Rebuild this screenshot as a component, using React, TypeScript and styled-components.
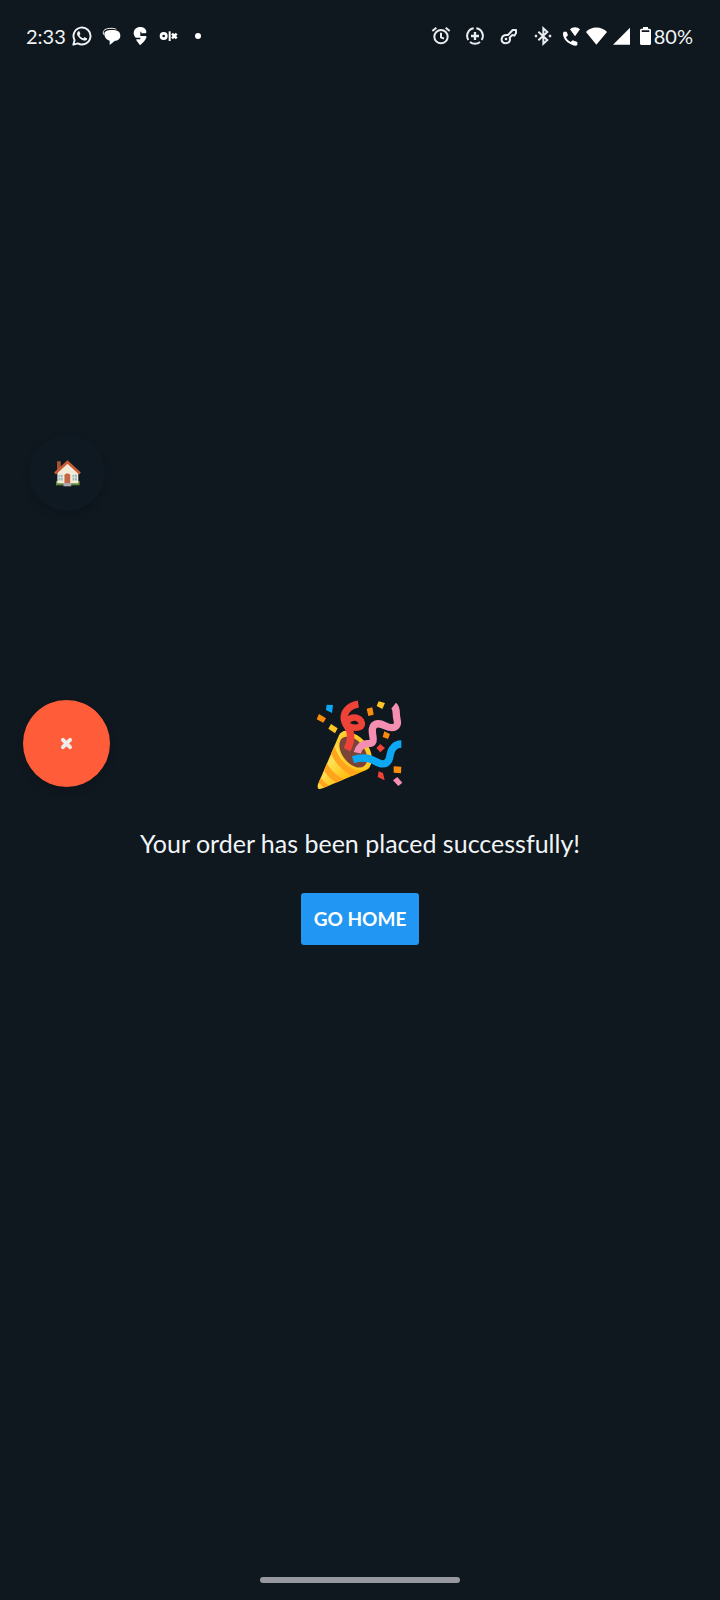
import React from 'react';
import styled, { createGlobalStyle } from 'styled-components';

const GlobalStyle = createGlobalStyle`
  * { box-sizing: border-box; }
  body { margin: 0; background: #0f171f; }
`;

const Screen = styled.div`
  position: relative;
  display: flex;
  flex-direction: column;
  min-height: 100vh;
  background: #0f171f;
  color: #f1f4f6;
  font-family: Lato, 'Open Sans', sans-serif;
`;

const StatusBar = styled.header`
  display: flex;
  align-items: center;
  justify-content: space-between;
  height: 72px;
  padding: 0 27px 0 26px;
  font-size: 20px;
  line-height: 24px;
`;

const Group = styled.div<{ $gap: number }>`
  display: flex;
  align-items: center;
  gap: ${(p) => p.$gap}px;
`;

const Icon = styled.svg`
  display: block;
  flex: none;
`;

const Main = styled.main`
  flex: 1;
  display: flex;
  flex-direction: column;
  align-items: center;
  justify-content: center;
`;

const Message = styled.p`
  margin: 38px 0 35px;
  font-size: 25px;
  line-height: 30px;
  text-align: center;
`;

const HomeButton = styled.button`
  height: 52px;
  padding: 0 13px;
  border: 0;
  border-radius: 3px;
  background: #2196f3;
  color: #fff;
  font: 700 19px/24px Lato, 'Open Sans', sans-serif;
  cursor: pointer;
`;

const FloatingButton = styled.button<{ $size: number; $top: number; $left: number; $color: string }>`
  position: absolute;
  top: ${(p) => p.$top}px;
  left: ${(p) => p.$left}px;
  display: flex;
  align-items: center;
  justify-content: center;
  width: ${(p) => p.$size}px;
  height: ${(p) => p.$size}px;
  padding: 0;
  border: 0;
  border-radius: 50%;
  background: ${(p) => p.$color};
  box-shadow: 0 4px 8px rgba(0, 0, 0, 0.12);
  cursor: pointer;
`;

const NavigationBar = styled.footer`
  display: flex;
  justify-content: center;
  height: 28px;
  padding-top: 5px;
`;

const Handle = styled.div`
  width: 200px;
  height: 6px;
  border-radius: 3px;
  background: #96999d;
`;

const WhatsApp = () => (
  <Icon width="20" height="20" viewBox="0 0 24 24" fill="#f1f4f6">
    <path d="M17.47 14.38c-.3-.15-1.76-.87-2.03-.97-.27-.1-.47-.15-.67.15-.2.3-.77.97-.94 1.16-.17.2-.35.22-.64.08-.3-.15-1.26-.46-2.39-1.48-.88-.79-1.48-1.76-1.65-2.06-.17-.3-.02-.46.13-.6.13-.14.3-.35.45-.53.15-.17.2-.3.3-.5.1-.2.05-.37-.03-.52-.07-.15-.67-1.61-.91-2.2-.24-.59-.49-.51-.67-.52h-.57c-.2 0-.52.07-.79.37-.27.3-1.04 1.02-1.04 2.48s1.06 2.87 1.21 3.07c.15.2 2.1 3.2 5.08 4.49.71.3 1.26.49 1.69.62.71.23 1.36.2 1.87.12.57-.09 1.76-.72 2.01-1.41.25-.7.25-1.29.17-1.42-.07-.12-.27-.2-.57-.34z" />
    <path d="M1.600 22.400 3.100 17A10.200 10.200 0 1 1 7 20.900Z" fill="none" stroke="#f1f4f6" strokeWidth="2.300" strokeLinejoin="round" />
  </Icon>
);

const Chat = () => (
  <Icon width="20" height="20" viewBox="0 0 60 60">
    <path d="M8 26C2 11 17 7 30 7c8 0 13 1 16 3" fill="none" stroke="#f1f4f6" strokeWidth="3" />
    <path d="M10 24c0-9 9-12 23-12 16 0 25 5 25 17 0 10-8 15-16 15L26 57V44c-9-2-16-10-16-20Z" fill="#fff" />
  </Icon>
);

const MapPin = () => (
  <Icon width="20" height="20" viewBox="0 0 60 60" fill="#fff">
    <path d="M30 58 19 43c-1-2 0-3 2-3h10v-5H17c-4-4-6-9-6-13C11 10 19 3 31 3c11 0 18 7 18 14 0 4-1 5-4 5H34v-5h-3v13h15c3 0 4 2 3 5-3 9-11 15-19 23Z" />
  </Icon>
);

const Olx = () => (
  <Icon width="20" height="20" viewBox="0 0 60 60" fill="none" stroke="#fff">
    <circle cx="14" cy="30" r="8" strokeWidth="8" />
    <path d="M32 16v29" strokeWidth="6" />
    <path d="m39 23 14 14M53 23 39 37" strokeWidth="8" />
  </Icon>
);

const Dot = () => (
  <Icon width="20" height="20" viewBox="0 0 20 20">
    <circle cx="10" cy="10" r="3" fill="#fff" />
  </Icon>
);

const Alarm = () => (
  <Icon width="20" height="20" viewBox="0 0 60 60" fill="none" stroke="#e9edf0" strokeWidth="6">
    <circle cx="30" cy="32" r="20" />
    <path d="M30 20v14l9 4M4 15 16 5M56 15 44 5" />
  </Icon>
);

const DataSaver = () => (
  <Icon width="20" height="20" viewBox="0 0 60 60" fill="none" stroke="#e9edf0" strokeWidth="6">
    <path d="M26 7a23 23 0 0 0-16 35M15 48a23 23 0 0 0 30 0M50 42A23 23 0 0 0 34 7" />
    <path d="M30 18v24M18 30h24" strokeWidth="7" />
  </Icon>
);

const Key = () => (
  <Icon width="20" height="20" viewBox="0 0 60 60" fill="none" stroke="#e9edf0" strokeWidth="6" strokeLinejoin="round">
    <path d="M27 27 41 12h10v9l-5 8-6-2-8 8c3 9-2 17-12 17-8 0-13-6-12-13 1-9 9-13 19-12Z" />
    <circle cx="21" cy="39" r="4" fill="#e9edf0" stroke="none" />
  </Icon>
);

const Bluetooth = () => (
  <Icon width="20" height="20" viewBox="0 0 60 60" fill="none" stroke="#e9edf0" strokeWidth="6">
    <path d="m16 17 27 25-12 11V7l12 11-27 25" />
    <path d="m4 30 5-5 5 5-5 5ZM46 30l5-5 5 5-5 5Z" fill="#e9edf0" stroke="none" />
  </Icon>
);

const WifiCall = () => (
  <Icon width="17" height="20" viewBox="0 0 51 60" fill="#fff">
    <path d="M21 10c8-8 22-8 30 0L36 31ZM2 17h9l4 11-6 6c3 7 7 11 14 14l6-5 14 5v9c-3 3-9 2-15 0C12 51 1 39 0 25c0-4 1-7 2-8Z" />
  </Icon>
);

const Wifi = () => (
  <Icon width="21" height="20" viewBox="0 0 63 60" fill="#fff">
    <path d="M31 56 0 18c14-18 48-18 63 0Z" />
  </Icon>
);

const Signal = () => (
  <Icon width="17" height="20" viewBox="0 0 51 60" fill="#fff">
    <path d="M0 56 51 5v51Z" />
  </Icon>
);

const Battery = () => (
  <Icon width="11" height="20" viewBox="0 0 33 60" fill="#fff">
    <path d="M9 3h15v5h6l3 3v43l-3 3H3l-3-3V11l3-3h6ZM5 13v5h23v-5Z" fillRule="evenodd" />
  </Icon>
);

const House = () => (
  <Icon width="27" height="27" viewBox="0 0 80 80">
    <path d="M6 62h70v13H6Z" fill="#66883d" />
    <path d="M10 35 40 8l32 27v34H10Z" fill="#f4ead8" />
    <path d="M9 4h11v22L9 36Z" fill="#a95231" />
    <path d="m3 40 37-34 37 34" fill="none" stroke="#c75d35" strokeWidth="8" />
    <path d="M13 44h13v17H13ZM55 44h13v17H55Z" fill="#9cbac1" />
    <path d="M19 43v19M12 52h15M61 43v19M54 52h15" stroke="#e9ebdf" strokeWidth="2" />
    <path d="M31 69V45c0-7 17-7 17 0v24Z" fill="#c46645" />
    <path d="M28 68h23v10H28Z" fill="#aaa9b1" />
  </Icon>
);

const Cross = () => (
  <Icon width="13" height="13" viewBox="0 0 40 40">
    <path d="m9 9 22 22M31 9 9 31" stroke="#ececec" strokeWidth="12" strokeLinecap="round" />
  </Icon>
);

const PartyPopper = () => (
  <Icon width="88" height="90" viewBox="49 31 264 270" role="img" aria-label="Party popper">
    <defs>
      <linearGradient id="cone" x1="70" y1="180" x2="165" y2="260" gradientUnits="userSpaceOnUse">
        <stop offset="0" stopColor="#ffca28" />
        <stop offset=".35" stopColor="#ffe052" />
        <stop offset="1" stopColor="#ffb300" />
      </linearGradient>
      <clipPath id="coneShape">
        <path d="M118 137 55 284c-5 12 2 17 14 12l131-55c24-11 14-48-8-79-27-38-61-52-74-25Z" />
      </clipPath>
    </defs>
    <g clipPath="url(#coneShape)">
      <path d="M49 120h180v190H49Z" fill="url(#cone)" />
      <path d="M102 160c9 39 36 73 76 89l-17 12c-38-20-62-50-70-79ZM79 215c12 25 30 42 54 54l-20 11c-21-10-36-28-44-47ZM60 258c8 14 18 24 30 31l-15 9-21-23Z" fill="#ffa41c" />
    </g>
    <ellipse cx="166" cy="186" rx="42" ry="63" transform="rotate(-37 166 186)" fill="#ffca28" />
    <ellipse cx="161" cy="187" rx="33" ry="53" transform="rotate(-38 161 187)" fill="#7a4538" />
    <g fill="none" strokeWidth="22" strokeLinejoin="round">
      <path d="M142 180c17-33 12-55 1-70-13-18-12-36-1-49 9-11 21-16 34-18" stroke="#ef4338" />
      <path d="M140 107c0-26 34-30 44-13 10 18-11 27-42 14" stroke="#ef4338" strokeWidth="20" />
      <path d="M173 189c3-15 16-27 31-27 25 0 15-19 14-34-2-25 14-32 38-20 27 13 42 3 36-19-5-17 2-31-10-41" stroke="#f48fb1" />
      <path d="M160 210c26-8 47-6 65 4 18 11 34 13 42-2 7-15 2-27 15-39 6-7 13-10 23-10" stroke="#0da8f4" />
    </g>
    <path d="m81 45 19 1-3 24-18-9Z" fill="#0da8f4" />
    <path d="m58 73 21 13-8 13-20-10ZM201 57l17-4 4 22-16 4ZM254 125l17 8-6 15-16-6ZM282 230l23 1-1 20-22-2Z" fill="#f98c0a" />
    <path d="m94 103 20 13-8 15-20-14ZM237 35l19 5-8 18-17-9Z" fill="#fdc624" />
    <path d="m242 163 14 12-14 13-12-13ZM237 245l13 5 5 22-21-10Z" fill="#ef4338" />
    <path d="m293 262 15 17-12 10-16-17Z" fill="#f48fb1" />
  </Icon>
);

export default function App() {
  return (
    <Screen>
      <GlobalStyle />
      <StatusBar>
        <Group $gap={6}>
          <time>2:33</time>
          <Group $gap={9}>
            <WhatsApp />
            <Chat />
            <MapPin />
            <Olx />
            <Dot />
          </Group>
        </Group>
        <Group $gap={10}>
          <Group $gap={14}>
            <Alarm />
            <DataSaver />
            <Key />
            <Bluetooth />
          </Group>
          <Group $gap={6}>
            <WifiCall />
            <Wifi />
            <Signal />
          </Group>
          <Group $gap={3}>
            <Battery />
            <span>80%</span>
          </Group>
        </Group>
      </StatusBar>
      <Main>
        <PartyPopper />
        <Message>Your order has been placed successfully!</Message>
        <HomeButton type="button">GO HOME</HomeButton>
      </Main>
      <FloatingButton type="button" aria-label="Home" $size={76} $top={435} $left={29} $color="#0f1922">
        <House />
      </FloatingButton>
      <FloatingButton type="button" aria-label="Close" $size={87} $top={700} $left={23} $color="#ff5d39">
        <Cross />
      </FloatingButton>
      <NavigationBar>
        <Handle />
      </NavigationBar>
    </Screen>
  );
}
